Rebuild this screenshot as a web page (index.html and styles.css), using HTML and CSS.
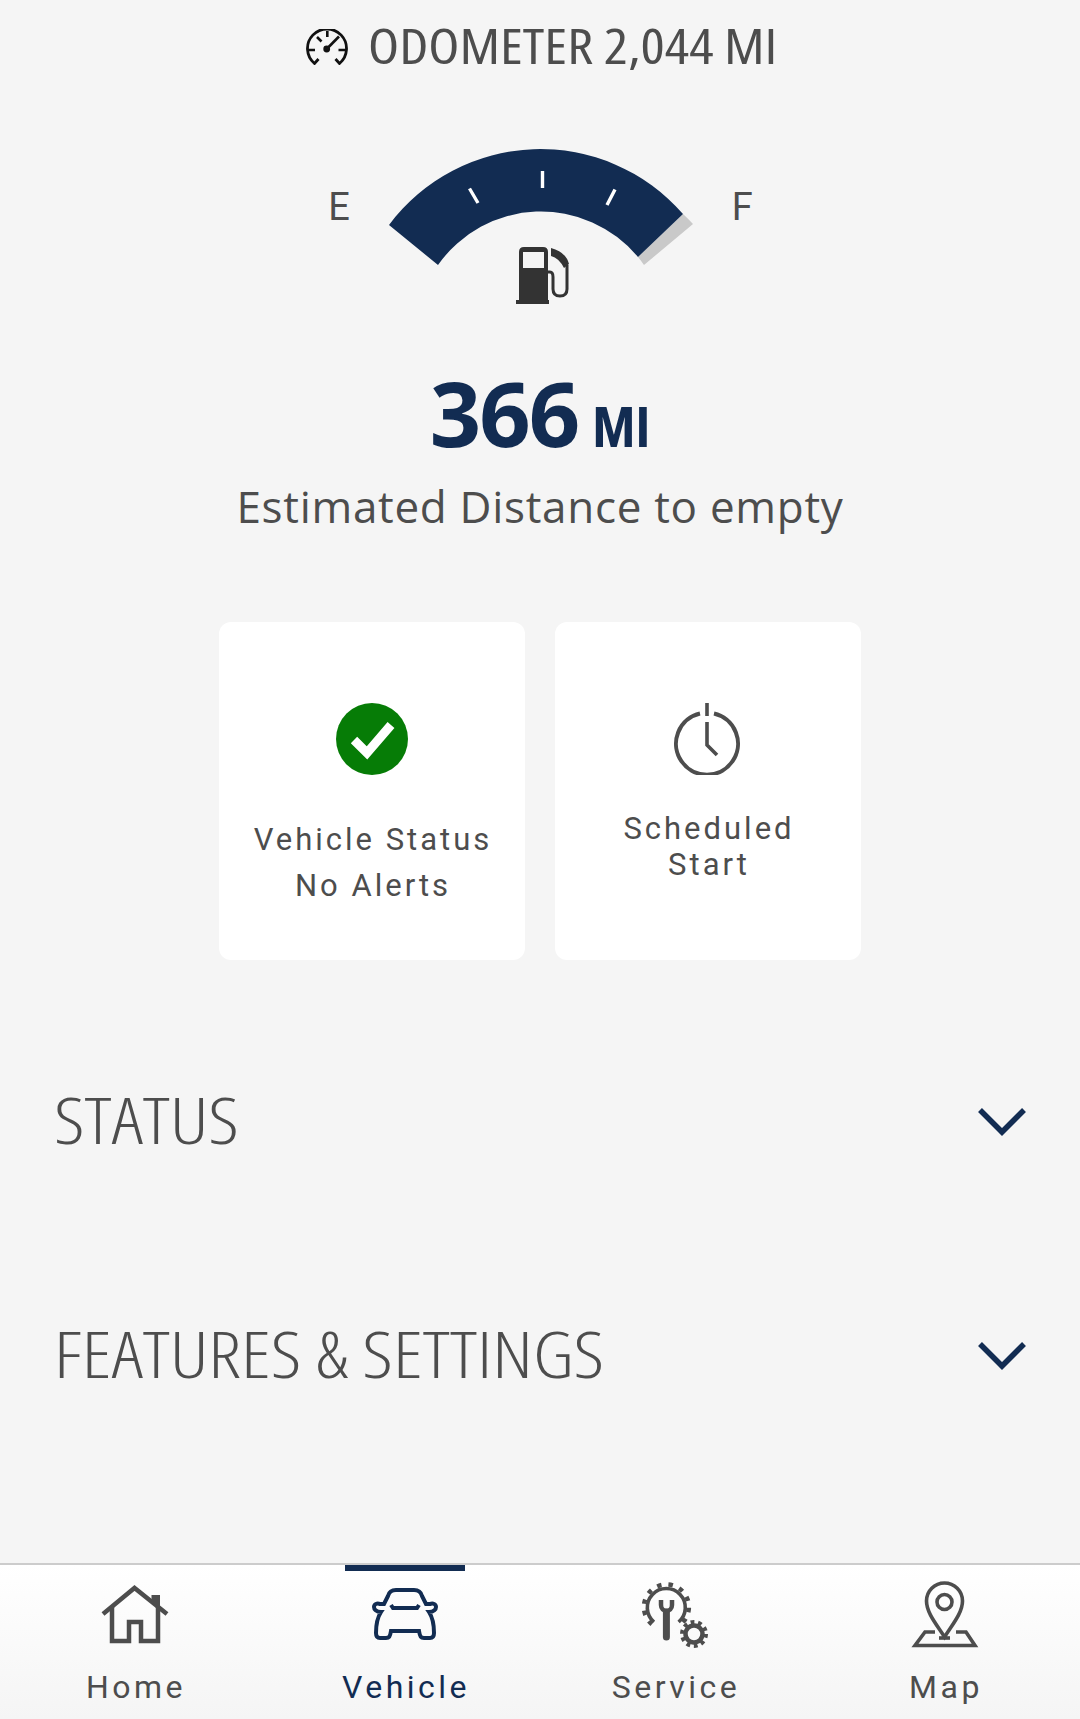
FILE: index.html
```html
<!DOCTYPE html>
<html>
<head>
    <meta charset="utf-8">
    <meta name="viewport" content="width=device-width, initial-scale=1">
    <title>Vehicle</title>
    <link rel="stylesheet" href="styles.css">
</head>
<body>
    <div class="page">
        <div class="odometer">
            <svg class="odo-icon" viewBox="0 0 42 36">
                <path d="M12.500 30 L8.500 34.500 A19.500 19.500 0 1 1 33.500 34.500 L29.500 30" fill="none" stroke="#111" stroke-width="2.800" />
                <path d="M2 21 H9 M32.500 21 H40.500 M21.300 2 V8 M11 8 L15.500 12.500" stroke="#111" stroke-width="2.600" />
                <path d="M20.700 20 L33 7.500" stroke="#111" stroke-width="2.600" />
                <circle cx="20.700" cy="20" r="3.400" fill="#111" />
            </svg>
            <span class="odo-text">ODOMETER 2,044 MI</span>
        </div>

        <div class="gauge">
            <span class="gauge-label">E</span>
            <svg class="gauge-svg" viewBox="388 148 304 156">
                <path d="M682 214 A189 189 0 0 1 692 224 L643 265 A126 126 0 0 0 637 257 Z" fill="#c9c9c9" />
                <path d="M388 225 A189 189 0 0 1 682 214 L637 257 A126 126 0 0 0 437 265 Z" fill="#122c52" />
                <path d="M541.500 171 V188 M468.500 188.500 L477 203 M614 189.500 L606 205" stroke="#fff" stroke-width="3.400" />
                <path d="M518 301 V252 Q518 247 523 247 H542 Q547 247 547 252 V301 Z M522 252 V268 H543 V252 Z" fill="#333" fill-rule="evenodd" />
                <rect x="515" y="300" width="33" height="4" fill="#333" />
                <path d="M547 272 H549 Q552 272 552 277 V289 Q552 296 559 296 Q566 296 566 289 V265" fill="none" stroke="#333" stroke-width="3" />
                <path d="M550 248 Q565 252 568 264 L563 268 Q558 258 550 256 Z" fill="#333" />
            </svg>
            <span class="gauge-label">F</span>
        </div>

        <div class="range">
            <span class="range-num">366</span>
            <span class="range-unit">MI</span>
        </div>
        <div class="range-caption">Estimated Distance to empty</div>

        <div class="cards">
            <div class="card">
                <svg class="card-icon" viewBox="0 0 72 72">
                    <circle cx="36" cy="36" r="36" fill="#067c06" />
                    <path d="M18 37 L31 50 L55 22" fill="none" stroke="#fff" stroke-width="9" />
                </svg>
                <div class="card-text card-text-status">Vehicle Status<br>No Alerts</div>
            </div>
            <div class="card">
                <svg class="card-icon card-icon-timer" viewBox="0 0 72 72">
                    <path d="M29 10.500 A31 31 0 1 0 43 10.500" fill="none" stroke="#4d4d4d" stroke-width="4" />
                    <path d="M36 0 V13 M36 19 V42 L46 52" fill="none" stroke="#4d4d4d" stroke-width="3.600" />
                </svg>
                <div class="card-text card-text-start">Scheduled<br>Start</div>
            </div>
        </div>

        <div class="section-row section-row-first">
            <span class="section-title">STATUS</span>
            <svg class="chevron" viewBox="0 0 48 28"><path d="M2 2 L24 24 L46 2" fill="none" stroke="#122c52" stroke-width="5.500" /></svg>
        </div>
        <div class="section-row">
            <span class="section-title">FEATURES &amp; SETTINGS</span>
            <svg class="chevron" viewBox="0 0 48 28"><path d="M2 2 L24 24 L46 2" fill="none" stroke="#122c52" stroke-width="5.500" /></svg>
        </div>

        <div class="tabs">
            <div class="tab">
                <svg class="tab-icon" viewBox="0 0 70 70">
                    <path d="M3 34 L34.500 8 L67 34" fill="none" stroke="#4d4d4d" stroke-width="4.500" />
                    <path d="M12 27 V61 H29 V42 H41 V61 H58 V27" fill="none" stroke="#4d4d4d" stroke-width="4.500" />
                    <path d="M51.500 15 H60 V29 L51.500 22 Z" fill="#4d4d4d" />
                </svg>
                <div class="tab-label">Home</div>
            </div>
            <div class="tab tab-active">
                <svg class="tab-icon" viewBox="0 0 70 70">
                    <g transform="translate(2 8)" fill="none" stroke="#122c52" stroke-width="4">
                        <path d="M9 24 C4 24 2 21 2 19 C2 16 5 15 8 16 L12 16 L16 8 C17 4 20 2 24 2 L42 2 C46 2 49 4 50 8 L54 16 L58 16 C61 15 64 16 64 19 C64 21 62 24 57 24 C61 30 62 36 62 45 C62 49 60 50 58 50 L52 50 C49 50 48 49 47 43 L19 43 C18 49 17 50 14 50 L8 50 C6 50 4 49 4 45 C4 36 5 30 9 24 Z" />
                        <path d="M19 17 L21 20 H45 L47 17" />
                    </g>
                </svg>
                <div class="tab-label">Vehicle</div>
            </div>
            <div class="tab">
                <svg class="tab-icon" viewBox="0 0 70 70">
                    <g fill="none" stroke="#4d4d4d">
                        <path d="M14 42 A19 19 0 1 1 38.600 42" stroke-width="3.600" />
                        <path d="M11.900 44.200 A22.500 22.500 0 1 1 40.900 44.200" stroke-width="4.500" stroke-dasharray="4.500 6.800" />
                        <path d="M26.400 32 V57" stroke-width="7" stroke-linecap="round" />
                        <path d="M21 20 V25 C21 33 32 33 32 25 V20" stroke-width="4.500" />
                        <circle cx="54" cy="54" r="8.500" stroke-width="4.500" />
                        <circle cx="54" cy="54" r="12" stroke-width="4" stroke-dasharray="3.800 3.740" />
                    </g>
                </svg>
                <div class="tab-label">Service</div>
            </div>
            <div class="tab">
                <svg class="tab-icon" viewBox="0 0 70 70">
                    <g fill="none" stroke="#4d4d4d" stroke-width="3.600">
                        <path d="M34.600 57 C27 45 16.500 33 16.500 21 A18 18 0 0 1 52.500 21 C52.500 33 42 45 34.600 57 Z" />
                        <circle cx="34.500" cy="22" r="7.500" />
                        <path d="M25 52 H15 L5 65.500 H65 L56 52 H46" />
                        <path d="M29 58 H40" />
                    </g>
                </svg>
                <div class="tab-label">Map</div>
            </div>
        </div>
    </div>
</body>
</html>
```

FILE: styles.css
```css
html, body {
    margin: 0;
    padding: 0;
}

body {
    background: #f5f5f5;
    color: #4d4d4d;
    font-family: Roboto, "Liberation Sans", sans-serif;
}

.page {
    display: flex;
    flex-direction: column;
    height: 1719px;
    overflow: hidden;
}

.odometer {
    display: flex;
    align-items: center;
    justify-content: center;
    gap: 20px;
    height: 89px;
}

.odo-icon {
    width: 42px;
    height: 36px;
    margin-top: 5px;
}

.odo-text {
    width: 406px;
    font-family: "Open Sans", sans-serif;
    font-stretch: 75%;
    font-size: 50px;
    line-height: 60px;
    white-space: nowrap;
    transform: scaleX(1.142);
    transform-origin: left;
}

.gauge {
    display: flex;
    justify-content: center;
    gap: 39px;
    height: 156px;
    margin-top: 59px;
    padding-left: 1px;
}

.gauge-svg {
    width: 304px;
    height: 156px;
}

.gauge-label {
    margin-top: 34px;
    font-size: 38px;
    line-height: 50px;
}

.range {
    display: flex;
    align-items: baseline;
    justify-content: center;
    gap: 14px;
    margin-top: 63px;
    color: #122c52;
    font-family: "Open Sans", sans-serif;
    font-weight: 700;
    line-height: 90px;
}

.range-num {
    font-stretch: 91%;
    font-size: 90px;
    letter-spacing: -2px;
}

.range-unit {
    font-stretch: 76%;
    font-size: 56px;
}

.range-caption {
    margin-top: 6px;
    font-family: "Open Sans", sans-serif;
    font-size: 44px;
    line-height: 60px;
    letter-spacing: 0.700px;
    text-align: center;
}

.cards {
    display: grid;
    grid-template-columns: 306px 306px;
    justify-content: center;
    gap: 30px;
    margin-top: 86px;
}

.card {
    display: flex;
    flex-direction: column;
    align-items: center;
    height: 257px;
    padding-top: 81px;
    background: #fff;
    border-radius: 12px;
}

.card-icon {
    width: 72px;
    height: 72px;
}

.card-icon-timer {
    margin-right: 2px;
}

.card-text {
    padding-left: 2px;
    font-size: 31px;
    letter-spacing: 3px;
    text-align: center;
}

.card-text-status {
    margin-top: 42px;
    line-height: 46px;
}

.card-text-start {
    margin-top: 36px;
    line-height: 36px;
}

.section-row {
    display: flex;
    align-items: center;
    justify-content: space-between;
    height: 234px;
    padding: 0 54px;
}

.section-row-first {
    margin-top: 45px;
}

.section-title {
    margin-bottom: 4px;
    font-family: "Open Sans", sans-serif;
    font-stretch: 75%;
    font-weight: 300;
    font-size: 64px;
    line-height: 80px;
    transform: scaleX(1.2);
    transform-origin: left;
}

.chevron {
    width: 48px;
    height: 28px;
}

.tabs {
    display: grid;
    grid-template-columns: repeat(4, 1fr);
    height: 154px;
    margin-top: auto;
    border-top: 2px solid #ccc;
    background: linear-gradient(#fff, #f5f5f5);
}

.tab {
    position: relative;
    display: flex;
    flex-direction: column;
    align-items: center;
    padding-top: 15px;
}

.tab-icon {
    width: 70px;
    height: 70px;
}

.tab-label {
    margin-top: 17px;
    padding-left: 2px;
    font-size: 32px;
    line-height: 40px;
    letter-spacing: 3.500px;
}

.tab-active .tab-label {
    color: #122c52;
}

.tab-active::before {
    content: "";
    position: absolute;
    top: 0;
    left: 75px;
    width: 120px;
    height: 6px;
    background: #122c52;
}
```
